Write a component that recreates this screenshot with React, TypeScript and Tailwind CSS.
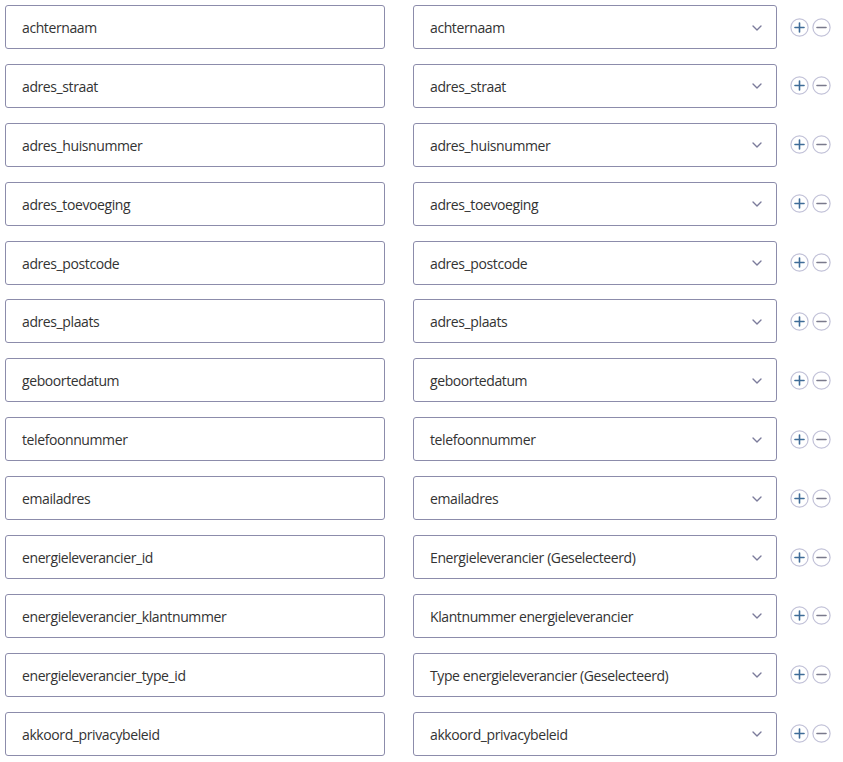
import { ChevronDown } from 'lucide-react'

const rows: [string, string][] = [
  ['achternaam', 'achternaam'],
  ['adres_straat', 'adres_straat'],
  ['adres_huisnummer', 'adres_huisnummer'],
  ['adres_toevoeging', 'adres_toevoeging'],
  ['adres_postcode', 'adres_postcode'],
  ['adres_plaats', 'adres_plaats'],
  ['geboortedatum', 'geboortedatum'],
  ['telefoonnummer', 'telefoonnummer'],
  ['emailadres', 'emailadres'],
  ['energieleverancier_id', 'Energieleverancier (Geselecteerd)'],
  ['energieleverancier_klantnummer', 'Klantnummer energieleverancier'],
  ['energieleverancier_type_id', 'Type energieleverancier (Geselecteerd)'],
  ['akkoord_privacybeleid', 'akkoord_privacybeleid'],
]

function CircleBtn({ plus }: { plus?: boolean }) {
  return (
    <svg width="19" height="19" viewBox="0 0 19 19">
      <circle cx="9.5" cy="9.5" r="8.6" fill="white" stroke="#c2c2d8" strokeWidth="1.2" />
      <line x1="5" y1="9.5" x2="14" y2="9.5" stroke={plus ? '#3f6c98' : '#7a7a8c'} strokeWidth="1.6" strokeLinecap="round" />
      {plus && <line x1="9.5" y1="5" x2="9.5" y2="14" stroke="#3f6c98" strokeWidth="1.6" strokeLinecap="round" />}
    </svg>
  )
}

export default function App() {
  return (
    <div className="bg-white w-[843px] h-[762px] pl-[5px] pt-[5px] font-['Open_Sans',sans-serif] text-[14px] text-[#333]">
      <div className="flex flex-col gap-[14.9px]">
        {rows.map(([field, label]) => (
          <div key={field} className="flex items-center">
            <div className="w-[380px] h-[44px] border border-[#8c8cab] rounded-[3px] flex items-center pl-4 pt-px tracking-[-0.4px]">
              {field}
            </div>
            <div className="ml-[28px] w-[364px] h-[44px] border border-[#8c8cab] rounded-[3px] flex items-center pl-4 pr-[11px] pt-px tracking-[-0.4px]">
              <span className="flex-1">{label}</span>
              <ChevronDown size={16} strokeWidth={2} className="text-[#7b7b9b]" />
            </div>
            <div className="ml-[13px] flex items-center gap-[3px]">
              <CircleBtn plus />
              <CircleBtn />
            </div>
          </div>
        ))}
      </div>
    </div>
  )
}
